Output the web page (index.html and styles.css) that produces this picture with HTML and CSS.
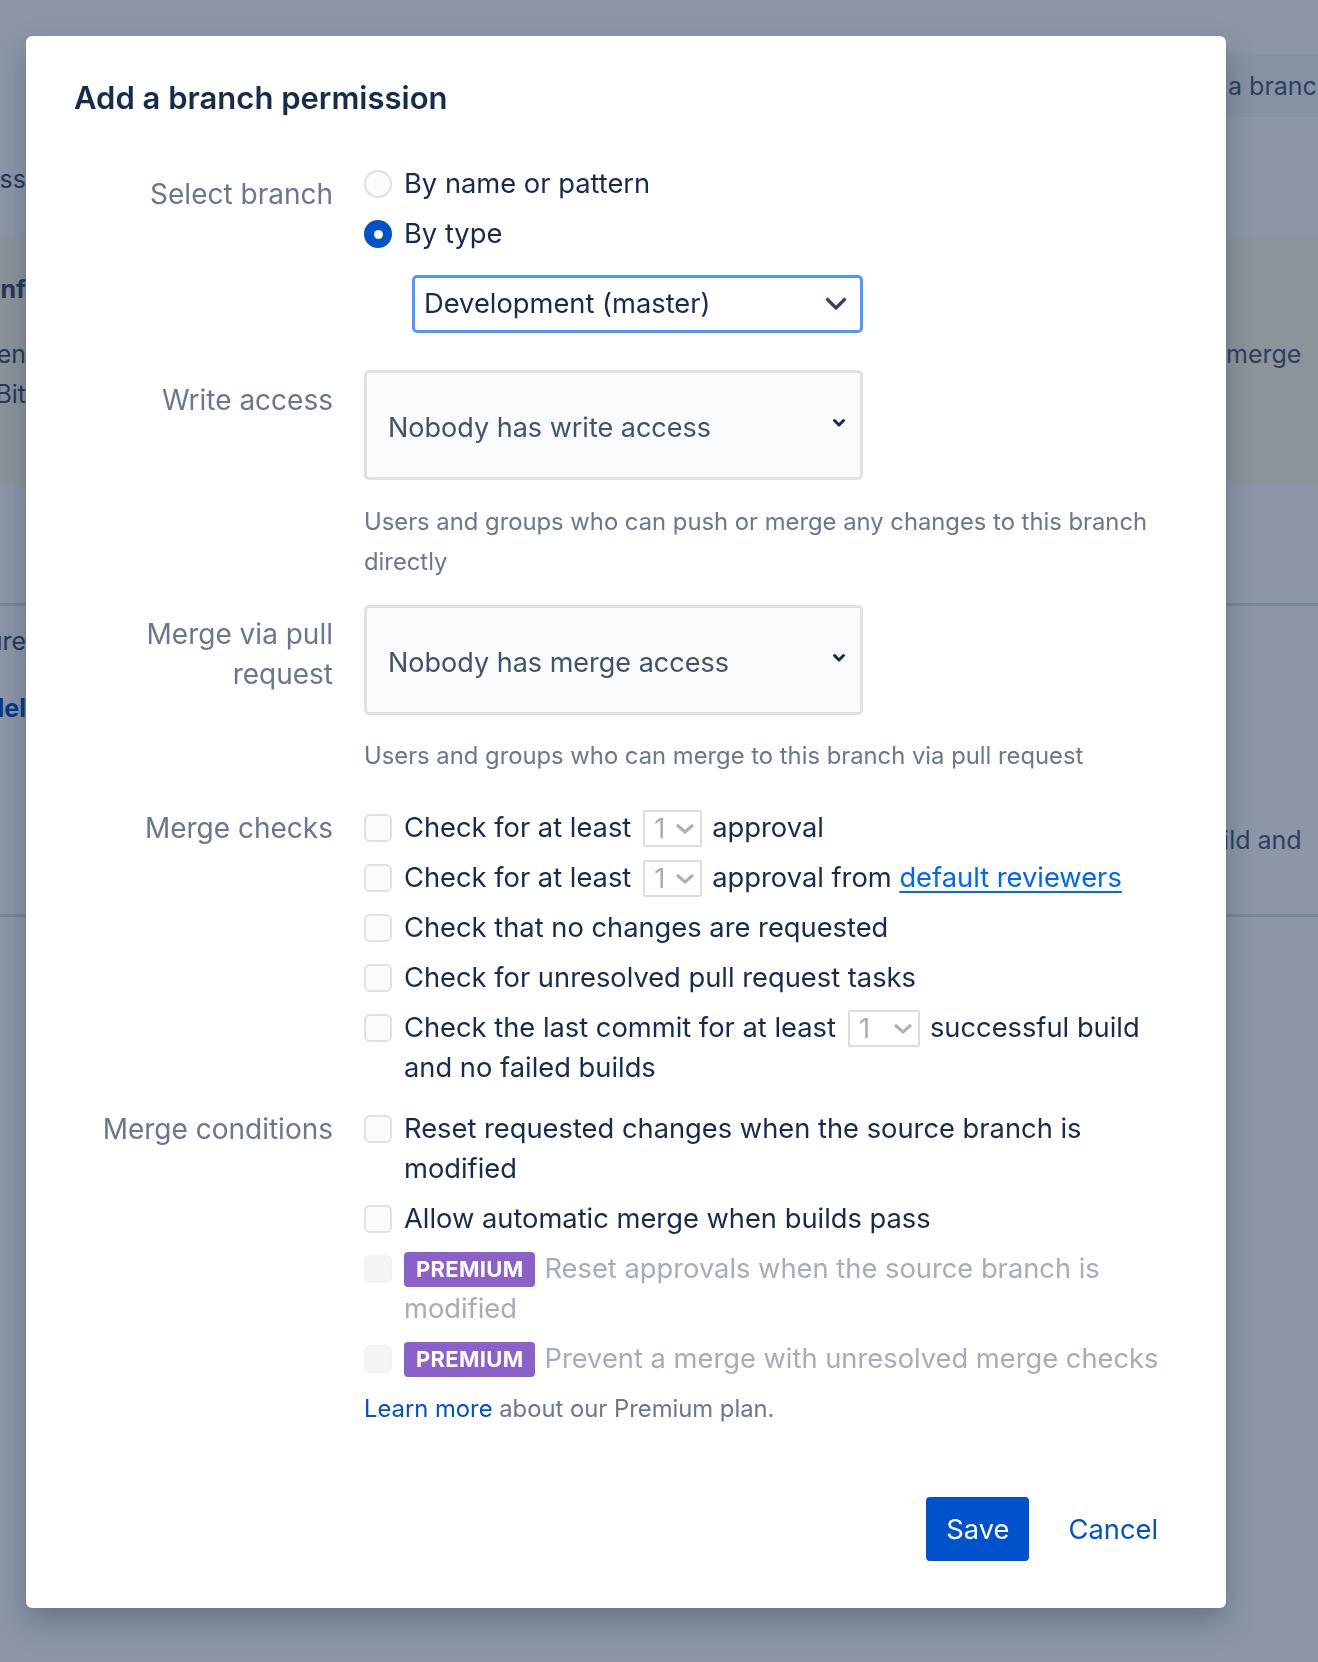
FILE: index.html
```html
<!DOCTYPE html>
<html>
    <head>
        <meta charset="utf-8">
        <title>Add a branch permission</title>

        <link rel="stylesheet" href="styles.css">
    </head>

    <body>
        <!-- page behind the dialog, mostly hidden -->
        <div class="page">
            <div class="bgHeader">
                <div class="bgRight"><span class="bgButton">a branch permission</span></div>
            </div>
            <div class="bgRow bgHeading">
                <div class="bgLeft">ss</div>
            </div>
            <div class="bgNotice">
                <div class="bgRow"><div class="bgLeft bold">nf</div></div>
                <div class="bgRow bgNoticeText">
                    <div class="bgLeft">en</div>
                    <div class="bgRight">merge</div>
                </div>
                <div class="bgRow"><div class="bgLeft">Bit</div></div>
            </div>
            <div class="bgSection">
                <div class="bgRow bgFirst"><div class="bgLeft">ure</div></div>
                <div class="bgRow bgLink"><div class="bgLeft bold">lel</div></div>
                <div class="bgRow bgBuild">
                    <div class="bgRight shifted">build and</div>
                </div>
            </div>
        </div>

        <div class="blanket">
            <div class="dialog">
                <h2 class="dialogTitle">Add a branch permission</h2>

                <div class="fieldGroup branchGroup">
                    <div class="fieldLabel offset">Select branch</div>
                    <div class="fieldControls">
                        <label class="radioRow"><span class="radio"></span>By name or pattern</label>
                        <label class="radioRow"><span class="radio checked"></span>By type</label>
                        <div class="typeSelect">
                            <span>Development (master)</span>
                            <svg width="22" height="14" viewBox="0 0 22 14"><path d="M2.5 2.5 L11 11 L19.5 2.5" fill="none" stroke="#344563" stroke-width="3.2" stroke-linecap="round" stroke-linejoin="round"/></svg>
                        </div>
                    </div>
                </div>

                <div class="fieldGroup writeGroup">
                    <div class="fieldLabel offset">Write access</div>
                    <div class="fieldControls">
                        <div class="userSelect">
                            <span>Nobody has write access</span>
                            <svg width="14" height="10" viewBox="0 0 14 10"><path d="M2.5 2.5 L7 7 L11.5 2.5" fill="none" stroke="#172B4D" stroke-width="3" stroke-linecap="round" stroke-linejoin="round"/></svg>
                        </div>
                        <p class="helpText">Users and groups who can push or merge any changes to this branch directly</p>
                    </div>
                </div>

                <div class="fieldGroup mergeGroup">
                    <div class="fieldLabel offset">Merge via pull request</div>
                    <div class="fieldControls">
                        <div class="userSelect">
                            <span>Nobody has merge access</span>
                            <svg width="14" height="10" viewBox="0 0 14 10"><path d="M2.5 2.5 L7 7 L11.5 2.5" fill="none" stroke="#172B4D" stroke-width="3" stroke-linecap="round" stroke-linejoin="round"/></svg>
                        </div>
                        <p class="helpText">Users and groups who can merge to this branch via pull request</p>
                    </div>
                </div>

                <div class="fieldGroup checksGroup">
                    <div class="fieldLabel">Merge checks</div>
                    <div class="fieldControls list">
                        <label class="checkRow"><span class="checkbox"></span><span>Check for at least<span class="miniSelect">1<svg width="20" height="11" viewBox="0 0 20 11"><path d="M2 2 L10 9 L18 2" fill="none" stroke="#B0B0B0" stroke-width="3"/></svg></span>approval</span></label>
                        <label class="checkRow"><span class="checkbox"></span><span>Check for at least<span class="miniSelect">1<svg width="20" height="11" viewBox="0 0 20 11"><path d="M2 2 L10 9 L18 2" fill="none" stroke="#B0B0B0" stroke-width="3"/></svg></span>approval from <a class="reviewers" href="#">default reviewers</a></span></label>
                        <label class="checkRow"><span class="checkbox"></span><span>Check that no changes are requested</span></label>
                        <label class="checkRow"><span class="checkbox"></span><span>Check for unresolved pull request tasks</span></label>
                        <label class="checkRow"><span class="checkbox"></span><span>Check the last commit for at least<span class="miniSelect wide">1<svg width="20" height="11" viewBox="0 0 20 11"><path d="M2 2 L10 9 L18 2" fill="none" stroke="#B0B0B0" stroke-width="3"/></svg></span>successful build and no failed builds</span></label>
                    </div>
                </div>

                <div class="fieldGroup conditionsGroup">
                    <div class="fieldLabel">Merge conditions</div>
                    <div class="fieldControls list">
                        <label class="checkRow"><span class="checkbox"></span><span>Reset requested changes when the source branch is modified</span></label>
                        <label class="checkRow"><span class="checkbox"></span><span>Allow automatic merge when builds pass</span></label>
                        <label class="checkRow disabled"><span class="checkbox"></span><span><span class="premium">PREMIUM</span>Reset approvals when the source branch is modified</span></label>
                        <label class="checkRow disabled"><span class="checkbox"></span><span><span class="premium">PREMIUM</span>Prevent a merge with unresolved merge checks</span></label>
                        <p class="learnMore"><a href="#">Learn more</a> about our Premium plan.</p>
                    </div>
                </div>

                <div class="dialogFooter">
                    <button class="saveButton">Save</button>
                    <button class="cancelButton">Cancel</button>
                </div>
            </div>
        </div>
    </body>
</html>
```

FILE: styles.css
```css
html, body {
    margin: 0;
    height: 100%;
    overflow: hidden;
}
body {
    background-color: white;
    font-family: Inter, "Noto Sans", sans-serif;
    color: #172B4D;
}

/* page behind the blanket */
.page {
    width: 100%;
    font-size: 25px;
    color: #42526E;
}
.bgHeader {
    padding-top: 54px;
    height: 63px;
    display: flex;
    justify-content: flex-end;
}
.bgRow {
    display: flex;
    justify-content: space-between;
    height: 40px;
    line-height: 40px;
}
.bgLeft {
    width: 26px;
    overflow: hidden;
    display: flex;
    justify-content: flex-end;
    white-space: nowrap;
}
.bgRight {
    width: 92px;
    overflow: hidden;
    white-space: nowrap;
    color: #505F79;
    margin-left: auto;
}
.bgRight.shifted {
    width: 125px;
}
.bgButton {
    display: flex;
    align-items: center;
    height: 63px;
    padding-left: 2px;
    background-color: #F4F5F7;
}
.bold {
    font-weight: 700;
}
.bgHeading {
    margin-top: 42px;
}
.bgNotice {
    margin-top: 38px;
    height: 248px;
    box-sizing: border-box;
    padding-top: 32px;
    background-color: #FFFAE6;
}
.bgNoticeText {
    margin-top: 25px;
}
.bgSection {
    margin-top: 118px;
    height: 314px;
    box-sizing: border-box;
    border-top: 3px solid #DFE1E6;
    border-bottom: 3px solid #DFE1E6;
}
.bgFirst {
    margin-top: 15px;
}
.bgLink .bgLeft {
    color: #0052CC;
}
.bgLink {
    margin-top: 27px;
}
.bgBuild {
    margin-top: 92px;
}

/* dialog */
.blanket {
    position: fixed;
    top: 0;
    left: 0;
    right: 0;
    bottom: 0;
    background-color: rgba(9, 30, 66, 0.465);
    padding: 36px 0 0 26px;
}
.dialog {
    width: 1200px;
    box-sizing: border-box;
    padding: 42px 48px 47px;
    background-color: white;
    border-radius: 6px;
    box-shadow: 0 14px 30px rgba(9, 30, 66, 0.28), 0 0 1px rgba(9, 30, 66, 0.31);
}
.dialogTitle {
    margin: 0;
    font-size: 31px;
    line-height: 40px;
    font-weight: 600;
    color: #172B4D;
}
.fieldGroup {
    display: grid;
    grid-template-columns: 259px 1fr;
    column-gap: 31px;
    font-size: 28px;
    line-height: 40px;
}
.fieldControls {
    font-size: 27.3px;
}
.fieldLabel {
    text-align: right;
    color: #6B778C;
}
.fieldLabel.offset {
    padding-top: 10px;
}
.mergeGroup .fieldLabel.offset {
    padding-top: 9px;
}
.branchGroup {
    margin-top: 46px;
}
.writeGroup {
    margin-top: 37px;
}
.mergeGroup {
    margin-top: 23px;
}
.checksGroup {
    margin-top: 32px;
}
.conditionsGroup {
    margin-top: 21px;
}
.list {
    display: flex;
    flex-direction: column;
    gap: 10px;
}

/* radios */
.radioRow {
    display: flex;
    align-items: center;
    gap: 12px;
    height: 40px;
    margin-bottom: 10px;
}
.radio {
    width: 28px;
    height: 28px;
    box-sizing: border-box;
    border-radius: 50%;
    border: 2px solid #DFE1E6;
    background-color: #FAFBFC;
    display: flex;
    align-items: center;
    justify-content: center;
}
.radio.checked {
    border-color: #0052CC;
    background-color: #0052CC;
}
.radio.checked::after {
    content: "";
    width: 9px;
    height: 9px;
    border-radius: 50%;
    background-color: white;
}
.typeSelect {
    margin: 21px 0 0 48px;
    width: 451px;
    height: 58px;
    box-sizing: border-box;
    border: 3px solid #4C9AFF;
    border-radius: 5px;
    padding: 0 13px 0 9px;
    display: flex;
    align-items: center;
    justify-content: space-between;
    color: #172B4D;
}

/* user selects */
.userSelect {
    width: 499px;
    height: 110px;
    box-sizing: border-box;
    border: 3px solid #DFE1E6;
    border-radius: 5px;
    background-color: #FAFBFC;
    padding: 6px 14px 0 21px;
    display: flex;
    align-items: center;
    justify-content: space-between;
    color: #42526E;
    font-size: 27px;
}
.userSelect svg {
    margin-bottom: 10px;
}
.helpText {
    margin: 22px 0 0;
    font-size: 23.8px;
    line-height: 40px;
    color: #6B778C;
}
.mergeGroup .helpText {
    margin-top: 21px;
}

/* checkboxes */
.checkRow {
    display: flex;
    align-items: flex-start;
    gap: 12px;
    color: #172B4D;
}
.checkbox {
    flex: none;
    margin-top: 6px;
    width: 28px;
    height: 28px;
    box-sizing: border-box;
    border: 2px solid #DFE1E6;
    border-radius: 6px;
    background-color: #FAFBFC;
}
.miniSelect {
    display: inline-flex;
    align-items: center;
    justify-content: space-between;
    vertical-align: top;
    box-sizing: border-box;
    width: 59px;
    height: 37px;
    margin: 2px 10px 0 12px;
    padding: 0 5px 0 9px;
    border: 2px solid #DDDDDD;
    border-radius: 2px;
    color: #ABABAB;
    line-height: 33px;
}
.miniSelect.wide {
    width: 72px;
}
.reviewers {
    color: #0065FF;
    text-decoration: underline;
    text-underline-offset: 4px;
}
.checkRow.disabled {
    color: #A5ADBA;
}
.checkRow.disabled .checkbox {
    border-color: #F1F2F4;
    background-color: #F4F5F7;
}
.premium {
    display: inline-block;
    vertical-align: top;
    margin: 3px 9px 0 0;
    height: 35px;
    padding: 0 12px;
    border-radius: 4px;
    background-color: #8B61C9;
    color: white;
    font-size: 22px;
    font-weight: 700;
    line-height: 35px;
    letter-spacing: 0.3px;
}
.learnMore {
    margin: 0;
    font-size: 23.8px;
    color: #6B778C;
}
.learnMore a {
    color: #0052CC;
    text-decoration: none;
}

/* footer */
.dialogFooter {
    margin-top: 68px;
    display: flex;
    justify-content: flex-end;
    gap: 19px;
}
.saveButton, .cancelButton {
    height: 64px;
    padding: 0 20px;
    border: none;
    border-radius: 4px;
    font-family: inherit;
    font-size: 27.3px;
}
.saveButton {
    background-color: #0052CC;
    color: white;
}
.cancelButton {
    background-color: transparent;
    color: #0052CC;
}
```
